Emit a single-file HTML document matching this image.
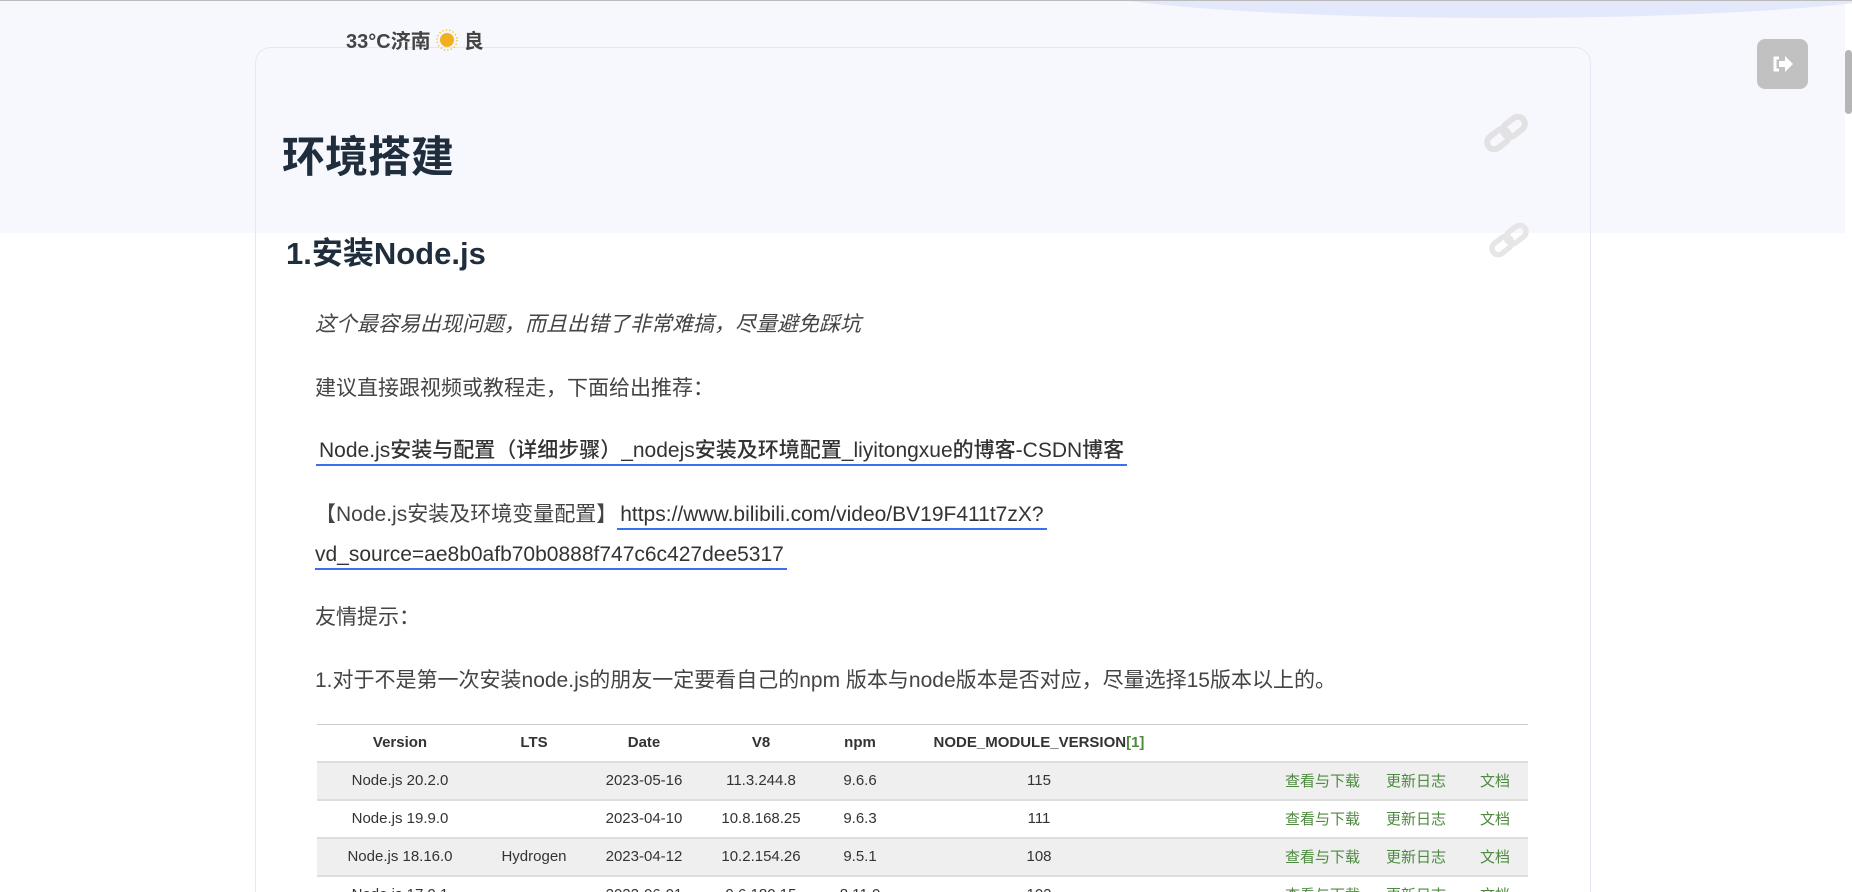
<!DOCTYPE html>
<html><head><meta charset="utf-8"><style>
*{margin:0;padding:0;box-sizing:border-box}
html,body{width:1852px;height:892px;overflow:hidden;background:#fff;font-family:"Liberation Sans","Noto Sans CJK SC",sans-serif;color:#444}
#w{position:relative;width:1852px;height:892px;overflow:hidden}
.band{position:absolute;left:0;top:0;width:1845px;height:233px;background:#f7f8fe}
.topline{position:absolute;left:0;top:0;width:1852px;height:1px;background:#bbb}
.curve{position:absolute;left:1050px;top:-60px;width:900px;height:78px;border-radius:50%;background:#e3e9fb}
.card{position:absolute;left:255px;top:47px;width:1336px;height:845px;border:1px solid #e3e8f7;border-bottom:none;border-radius:16px 16px 0 0}
.abs{position:absolute;white-space:nowrap}
.weather{left:346px;top:25px;font-size:20px;font-weight:bold;color:#444}
h1{position:absolute;left:282px;top:128px;font-size:43px;font-weight:bold;color:#1f2d3d;line-height:60px}
h2{position:absolute;left:286px;top:234px;font-size:31px;font-weight:bold;color:#1f2d3d;line-height:40px}
.p{font-size:21px;line-height:28px;left:315px}
.lnk{color:#333;font-weight:500;border-bottom:2px solid #3a6ff0;padding:0 3px 2px}
.tw{position:absolute;left:317px;top:724px;width:1211px;height:168px;overflow:hidden}
table{width:1211px;border-collapse:collapse;font-size:15px;color:#333;border-top:1px solid #ccc;font-family:"Liberation Sans Narrow","Liberation Sans","Noto Sans CJK SC",sans-serif}
td,th{height:38px;text-align:center;padding:0;border-bottom:2px solid #ddd}
th{font-weight:bold;height:37px}
tr.g td{background:#efefef}
.gr{color:#4d8a3f}
.btn{position:absolute;left:1757px;top:39px;width:51px;height:50px;border-radius:8px;background:#c1c1c1}
.sb{position:absolute;left:1845px;top:50px;width:7px;height:64px;border-radius:4px;background:#b5b5b5}
</style></head><body><div id="w">
<div class="band"></div>
<div class="curve"></div>
<div class="topline"></div>
<div class="card"></div>
<div class="abs weather">33°C济南 <svg width="22" height="22" viewBox="0 0 22 22" style="vertical-align:-3px"><circle cx="11" cy="11" r="7" fill="#f0b020"/><g stroke="#f5c842" stroke-width="1.5" stroke-dasharray="1.5 2"><circle cx="11" cy="11" r="10" fill="none"/></g></svg> 良</div>
<h1>环境搭建</h1>
<h2>1.安装Node.js</h2>
<svg class="abs" style="left:1481px;top:112px" width="50" height="42" viewBox="0 0 50 42"><g fill="none" stroke="#e2e2e4" stroke-width="6" transform="rotate(-38 25 21)"><rect x="3" y="14" width="24" height="14" rx="7"/><rect x="23" y="14" width="24" height="14" rx="7"/></g></svg>
<svg class="abs" style="left:1486px;top:221px" width="46" height="38" viewBox="0 0 50 42"><g fill="none" stroke="#e6e6e6" stroke-width="6" transform="rotate(-38 25 21)"><rect x="3" y="14" width="24" height="14" rx="7"/><rect x="23" y="14" width="24" height="14" rx="7"/></g></svg>
<div class="abs p" style="top:311px;font-style:italic">这个最容易出现问题，而且出错了非常难搞，尽量避免踩坑</div>
<div class="abs p" style="top:375px">建议直接跟视频或教程走，下面给出推荐：</div>
<div class="abs p" style="top:437px;left:316px"><span class="lnk">Node.js安装与配置（详细步骤）_nodejs安装及环境配置_liyitongxue的博客-CSDN博客</span></div>
<div class="abs p" style="top:501px">【Node.js安装及环境变量配置】<span class="lnk">https://www.bilibili.com/video/BV19F411t7zX?</span></div>
<div class="abs p" style="top:541px"><span class="lnk" style="padding-left:0">vd_source=ae8b0afb70b0888f747c6c427dee5317</span></div>
<div class="abs p" style="top:604px">友情提示：</div>
<div class="abs p" style="top:667px">1.对于不是第一次安装node.js的朋友一定要看自己的npm 版本与node版本是否对应，尽量选择15版本以上的。</div>
<div class="tw"><table>
<colgroup><col style="width:166px"><col style="width:102px"><col style="width:118px"><col style="width:116px"><col style="width:82px"><col style="width:276px"><col style="width:189px"><col style="width:100px"><col style="width:62px"></colgroup>
<tr><th>Version</th><th>LTS</th><th>Date</th><th>V8</th><th>npm</th><th>NODE_MODULE_VERSION<span class="gr">[1]</span></th><th></th><th></th><th></th></tr>
<tr class="g"><td>Node.js 20.2.0</td><td></td><td>2023-05-16</td><td>11.3.244.8</td><td>9.6.6</td><td>115</td><td class="gr" style="text-align:right;padding-right:6px">查看与下载</td><td class="gr">更新日志</td><td class="gr" style="text-align:left;padding-left:14px">文档</td></tr>
<tr><td>Node.js 19.9.0</td><td></td><td>2023-04-10</td><td>10.8.168.25</td><td>9.6.3</td><td>111</td><td class="gr" style="text-align:right;padding-right:6px">查看与下载</td><td class="gr">更新日志</td><td class="gr" style="text-align:left;padding-left:14px">文档</td></tr>
<tr class="g"><td>Node.js 18.16.0</td><td>Hydrogen</td><td>2023-04-12</td><td>10.2.154.26</td><td>9.5.1</td><td>108</td><td class="gr" style="text-align:right;padding-right:6px">查看与下载</td><td class="gr">更新日志</td><td class="gr" style="text-align:left;padding-left:14px">文档</td></tr>
<tr><td>Node.js 17.9.1</td><td></td><td>2022-06-01</td><td>9.6.180.15</td><td>8.11.0</td><td>102</td><td class="gr" style="text-align:right;padding-right:6px">查看与下载</td><td class="gr">更新日志</td><td class="gr" style="text-align:left;padding-left:14px">文档</td></tr>
</table></div>
<div class="btn"><svg width="51" height="50" viewBox="0 0 51 50"><path d="M22 19 h-4 v12 h4" fill="none" stroke="#fff" stroke-width="3"/><path d="M22 22 h6 v-5 l8 8 -8 8 v-5 h-6z" fill="#fff"/></svg></div>
<div class="sb"></div>
</div></body></html>
